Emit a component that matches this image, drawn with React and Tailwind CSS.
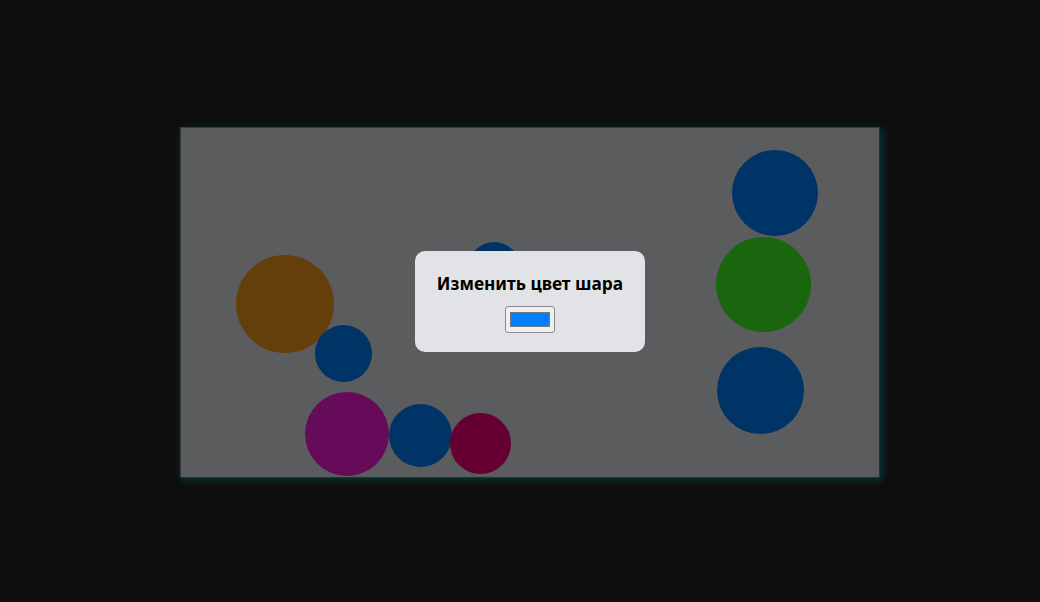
import React, { useState } from "react";

const balls = [
  { x: 285, y: 304, r: 49, color: "#653f0b" },
  { x: 343.5, y: 353.5, r: 28.5, color: "#003366" },
  { x: 347, y: 434, r: 42, color: "#660a5a" },
  { x: 420.5, y: 435, r: 31.5, color: "#003366" },
  { x: 480.5, y: 443.5, r: 30.5, color: "#660033" },
  { x: 493.5, y: 268, r: 26, color: "#003366" },
  { x: 775, y: 193, r: 43, color: "#003366" },
  { x: 763, y: 284.5, r: 47.5, color: "#1a660f" },
  { x: 760, y: 390.5, r: 43.5, color: "#003366" },
];

export default function App() {
  const [color, setColor] = useState("#0080ff");

  return (
    <div className="w-full h-screen bg-[#0e0e0e] flex items-center justify-center pl-[20px] pt-[3px] font-['Noto_Sans','Open_Sans',sans-serif]">
      <div className="relative w-[700px] h-[351px] bg-[#5b5c5e] border border-[#3a3b3c] border-b-[#123a3c] border-r-[#123a3c] overflow-hidden shadow-[2px_2px_8px_rgba(0,140,140,0.35)]">
        {balls.map((b, i) => (
          <div
            key={i}
            className="absolute rounded-full"
            style={{
              left: b.x - 181 - b.r,
              top: b.y - 128 - b.r,
              width: b.r * 2,
              height: b.r * 2,
              background: b.color,
            }}
          />
        ))}

        {/* modal */}
        <div className="absolute left-[234px] top-[123px] w-[230px] h-[101px] bg-[#e2e3e6] rounded-[10px] flex flex-col items-center pt-[20px]">
          <h2 className="text-[17.3px] font-bold text-black leading-[26px]">
            Изменить цвет шара
          </h2>
          <input
            type="color"
            value={color}
            onChange={(e) => setColor(e.target.value)}
            className="mt-[9px] w-[50px] h-[27px] border border-[#8a8a8a] rounded-[3px] bg-[#efefef] px-[2px] py-[1px] cursor-pointer"
          />
        </div>
      </div>
    </div>
  );
}
